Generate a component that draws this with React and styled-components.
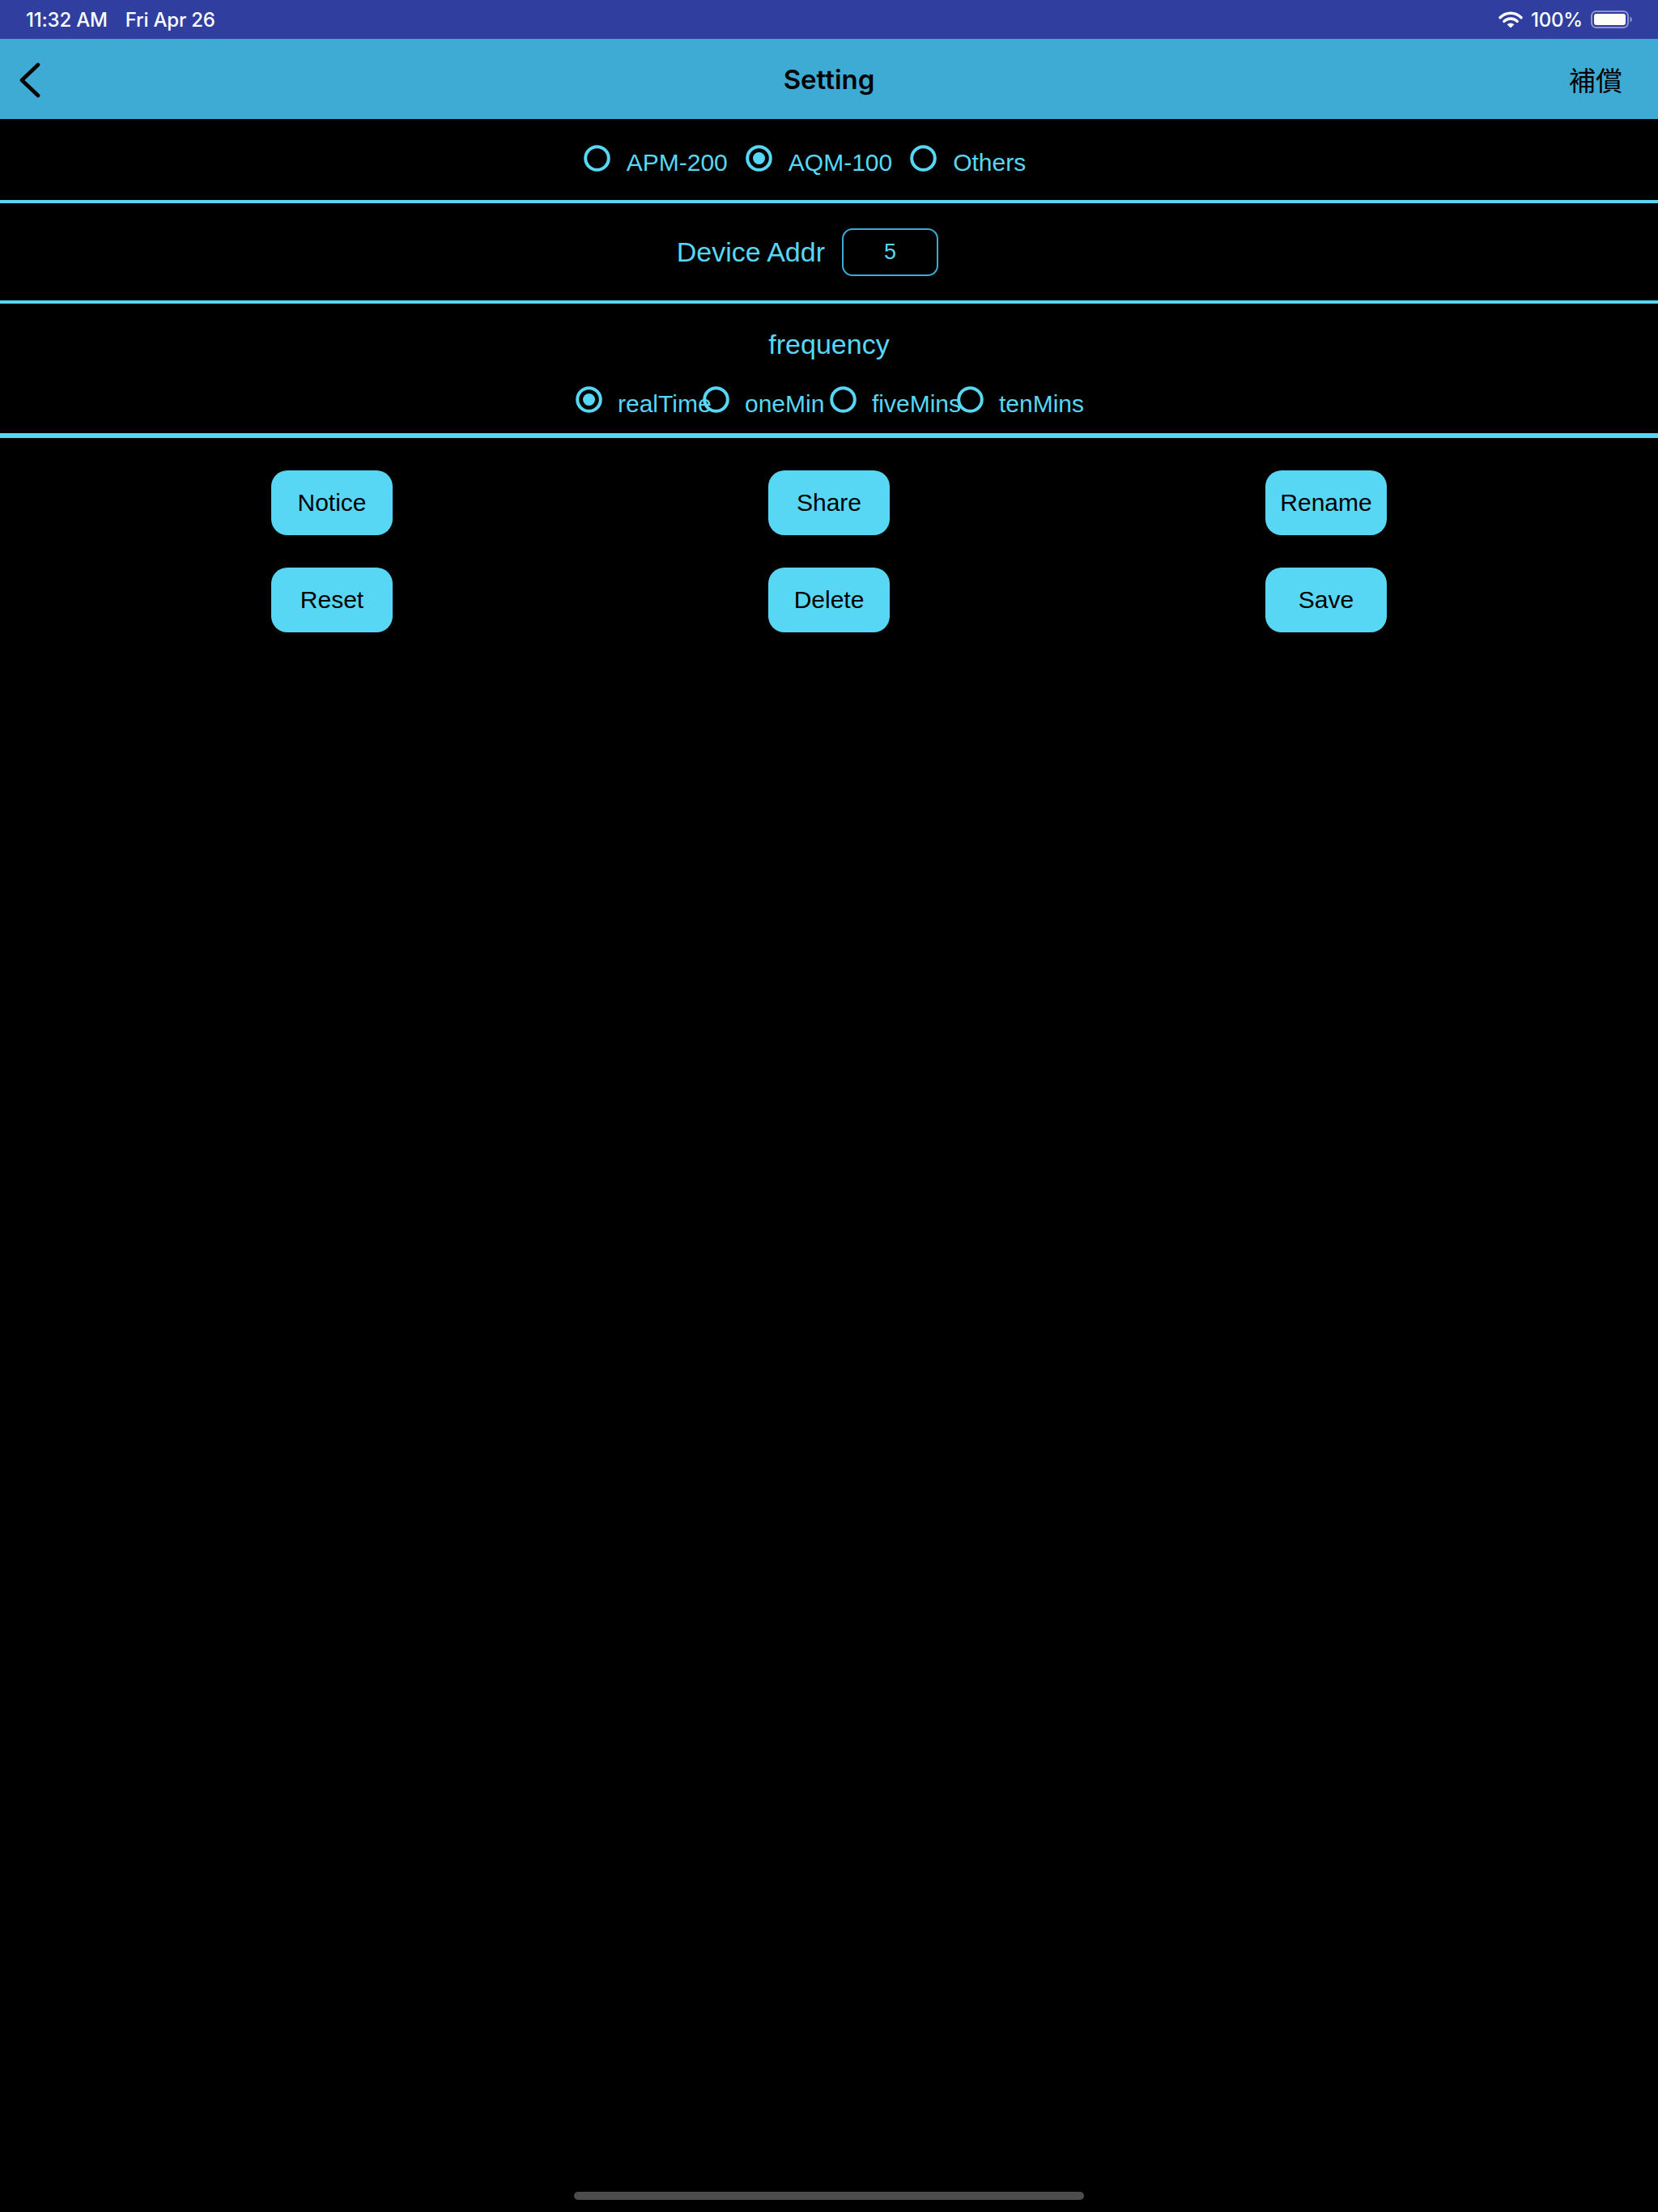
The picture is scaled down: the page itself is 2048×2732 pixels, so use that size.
import React from "react";
import styled, { createGlobalStyle } from "styled-components";

const cyan = "#58d7f4";

const GlobalStyle = createGlobalStyle`
  html, body {
    margin: 0;
    padding: 0;
    background: #000;
  }
  body {
    font-family: "Liberation Sans", Arial, sans-serif;
  }
`;

function Radio({ checked }) {
  return (
    <RadioIcon width="33" height="33" viewBox="0 0 33 33">
      <circle cx="16.5" cy="16.5" r="14.3" fill="none" stroke={cyan} strokeWidth="4" />
      {checked && <circle cx="16.5" cy="16.5" r="7.5" fill={cyan} />}
    </RadioIcon>
  );
}

function Wifi() {
  return (
    <svg width="30" height="21" viewBox="0 0 30 21">
      <path d="M2 7.8 A18 18 0 0 1 28 7.8" fill="none" stroke="#fff" strokeWidth="3.4" strokeLinecap="round" />
      <path d="M6.8 12.4 A11.5 11.5 0 0 1 23.2 12.4" fill="none" stroke="#fff" strokeWidth="3.4" strokeLinecap="round" />
      <path d="M15 20.5 L10.6 16.3 A6.4 6.4 0 0 1 19.4 16.3 Z" fill="#fff" />
    </svg>
  );
}

function Battery() {
  return (
    <svg width="52" height="22" viewBox="0 0 52 22">
      <rect x="1" y="1" width="45" height="20" rx="5.5" fill="none" stroke="rgba(255,255,255,0.45)" strokeWidth="2" />
      <rect x="4" y="4" width="39" height="14" rx="3" fill="#fff" />
      <path d="M48.5 7.5 Q51 8.5 51 11 Q51 13.5 48.5 14.5 Z" fill="rgba(255,255,255,0.45)" />
    </svg>
  );
}

function Chevron() {
  return (
    <svg width="30" height="44" viewBox="0 0 30 44">
      <polyline points="25,3 5,22 25,41" fill="none" stroke="#000" strokeWidth="4.6" strokeLinecap="round" strokeLinejoin="round" />
    </svg>
  );
}

export default function App() {
  const models = [
    { label: "APM-200", checked: false },
    { label: "AQM-100", checked: true },
    { label: "Others", checked: false },
  ];
  const freqs = [
    { label: "realTime", checked: true },
    { label: "oneMin", checked: false },
    { label: "fiveMins", checked: false },
    { label: "tenMins", checked: false },
  ];
  const actions = ["Notice", "Share", "Rename", "Reset", "Delete", "Save"];

  return (
    <Page>
      <GlobalStyle />
      <StatusBar>
        <StatusText>
          11:32 AM<DateText>Fri Apr 26</DateText>
        </StatusText>
        <StatusRight>
          <Wifi />
          <StatusText>100%</StatusText>
          <Battery />
        </StatusRight>
      </StatusBar>

      <Header>
        <BackButton>
          <Chevron />
        </BackButton>
        <Title>Setting</Title>
        <HeaderAction>補償</HeaderAction>
      </Header>

      <ModelRow>
        {models.map((m) => (
          <ModelItem key={m.label}>
            <Radio checked={m.checked} />
            <RadioLabel>{m.label}</RadioLabel>
          </ModelItem>
        ))}
      </ModelRow>
      <Divider />

      <AddrRow>
        <AddrLabel>Device Addr</AddrLabel>
        <AddrField>5</AddrField>
      </AddrRow>
      <Divider />

      <FreqSection>
        <FreqTitle>frequency</FreqTitle>
        <FreqRow>
          {freqs.map((f) => (
            <FreqItem key={f.label}>
              <Radio checked={f.checked} />
              <RadioLabel>{f.label}</RadioLabel>
            </FreqItem>
          ))}
        </FreqRow>
      </FreqSection>
      <Divider $thick />

      <ActionGrid>
        {actions.map((a) => (
          <ActionButton key={a}>{a}</ActionButton>
        ))}
      </ActionGrid>

      <HomeIndicator />
    </Page>
  );
}

const Page = styled.div`
  display: flex;
  flex-direction: column;
  height: 100vh;
  background: #000;
  overflow: hidden;
`;

const StatusBar = styled.div`
  height: 48px;
  flex-shrink: 0;
  background: #303f9f;
  display: flex;
  align-items: center;
  justify-content: space-between;
  padding: 0 31px 0 32px;
`;

const StatusText = styled.span`
  font-family: Inter, "Liberation Sans", sans-serif;
  font-weight: 500;
  font-size: 24px;
  color: #fff;
  letter-spacing: -0.2px;
`;

const DateText = styled.span`
  margin-left: 22px;
`;

const StatusRight = styled.div`
  display: flex;
  align-items: center;
  gap: 10px;
`;

const Header = styled.div`
  height: 99px;
  flex-shrink: 0;
  background: #3eabd5;
  display: grid;
  grid-template-columns: 1fr auto 1fr;
  align-items: center;
`;

const BackButton = styled.div`
  display: flex;
  align-items: center;
  padding-left: 22px;
  padding-top: 2px;
`;

const Title = styled.div`
  font-family: Inter, "Liberation Sans", sans-serif;
  font-weight: 600;
  font-size: 33px;
  color: #000;
`;

const HeaderAction = styled.div`
  justify-self: end;
  padding-right: 44px;
  font-family: "Noto Sans CJK TC", "Noto Sans CJK JP", sans-serif;
  font-size: 33px;
  color: #000;
`;

const Divider = styled.div`
  height: ${(p) => (p.$thick ? "6px" : "4px")};
  flex-shrink: 0;
  background: ${cyan};
`;

const ModelRow = styled.div`
  height: 100px;
  flex-shrink: 0;
  display: flex;
  align-items: center;
  justify-content: center;
  gap: 22px;
  padding: 0 60px 4px 0;
  box-sizing: border-box;
`;

const ModelItem = styled.div`
  display: flex;
  align-items: center;
  gap: 20px;
`;

const RadioIcon = styled.svg`
  flex-shrink: 0;
  display: block;
`;

const RadioLabel = styled.span`
  font-size: 30px;
  line-height: 30px;
  padding-top: 11px;
  color: ${cyan};
  white-space: nowrap;
`;

const AddrRow = styled.div`
  height: 120px;
  flex-shrink: 0;
  display: grid;
  grid-template-columns: 1fr 1fr;
  align-items: center;
`;

const AddrLabel = styled.span`
  justify-self: end;
  margin-right: 5px;
  font-size: 34px;
  color: ${cyan};
`;

const AddrField = styled.div`
  justify-self: start;
  margin-left: 16px;
  width: 119px;
  height: 59px;
  box-sizing: border-box;
  border: 2px solid #3aabd6;
  border-radius: 13px;
  display: flex;
  align-items: center;
  justify-content: center;
  font-size: 27px;
  color: ${cyan};
`;

const FreqSection = styled.div`
  height: 160px;
  flex-shrink: 0;
  box-sizing: border-box;
  padding-top: 30px;
  display: flex;
  flex-direction: column;
  align-items: center;
`;

const FreqTitle = styled.div`
  font-size: 34px;
  line-height: 40px;
  color: ${cyan};
`;

const FreqRow = styled.div`
  margin-top: 28px;
  display: grid;
  grid-template-columns: repeat(4, 157px);
  padding-left: 2px;
`;

const FreqItem = styled.div`
  display: flex;
  align-items: center;
  gap: 19px;
`;

const ActionGrid = styled.div`
  display: grid;
  grid-template-columns: repeat(3, 614px);
  justify-content: center;
  justify-items: center;
  row-gap: 40px;
  padding-top: 40px;
`;

const ActionButton = styled.button`
  width: 150px;
  height: 80px;
  border: none;
  border-radius: 20px;
  background: ${cyan};
  color: #000;
  font-family: "Liberation Sans", Arial, sans-serif;
  font-size: 30px;
  padding: 0;
  cursor: pointer;
`;

const HomeIndicator = styled.div`
  margin: auto auto 15px;
  width: 630px;
  height: 10px;
  border-radius: 5px;
  background: #4d4d4d;
`;
